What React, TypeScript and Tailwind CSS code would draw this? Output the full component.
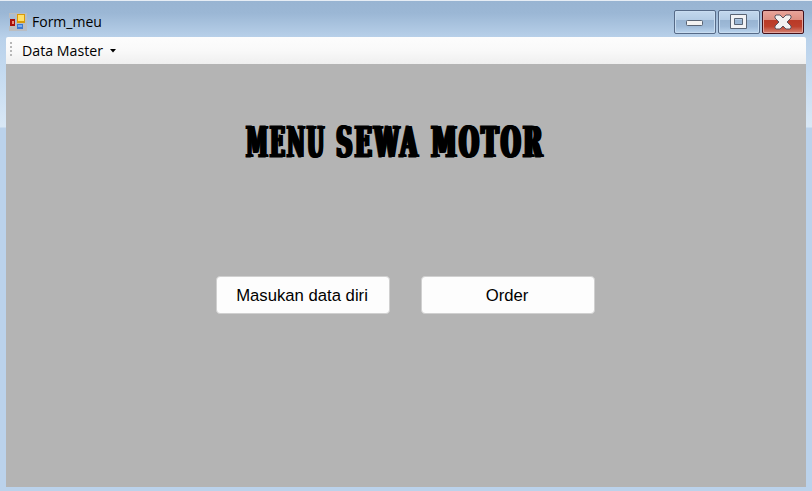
import type { ReactNode } from "react";

const FormIcon = () => (
  <svg width="18" height="18" viewBox="0 0 18 18" shapeRendering="crispEdges">
    <path d="M0 0h7v5H0zM0 13h7v5H0z" fill="#bdbdbd" />
    <path d="M1 1h5v4H1z" fill="#a9bdd3" />
    <path d="M7 0h11v18H7z" fill="#b9bdc3" />
    <rect x="1" y="6" width="5" height="7" fill="#a90f08" />
    <rect x="3" y="8" width="2" height="3" fill="#ed8d78" />
    <rect x="8" y="1" width="8" height="9" fill="#d89a08" />
    <rect x="9" y="2" width="6" height="6" fill="#ffe06a" />
    <rect x="8" y="11" width="6" height="5" fill="#3c78d0" />
    <rect x="9" y="12" width="4" height="2" fill="#78adf0" />
  </svg>
);

const CaptionButton = ({ close = false, label, children }: { close?: boolean; label: string; children: ReactNode }) => (
  <button
    aria-label={label}
    className={`flex h-6 w-[42px] items-center justify-center rounded-[2px] border ${
      close
        ? "border-[#43101a] bg-[linear-gradient(#e9a49a_0%,#dc8d80_42%,#b93a27_43%,#bd402c_70%,#d58475_100%)] shadow-[inset_0_0_0_1px_#e3a59d]"
        : "border-[#566a87] bg-[linear-gradient(#c3d8ed_0%,#b3cbe4_42%,#98b4d2_43%,#9ebad8_70%,#bcd5ee_100%)] shadow-[inset_0_0_0_1px_#c8dcf0]"
    }`}
  >
    {children}
  </button>
);

const TitleWord = ({ text, box, scale }: { text: string; box: string; scale: string }) => (
  <span className={`block ${box}`}>
    <span className={`block w-max origin-left ${scale}`}>{text}</span>
  </span>
);

const FormButton = ({ children }: { children: ReactNode }) => (
  <button className="h-[38px] w-[174px] rounded-[4px] border border-[#d0d0d0] bg-[#fdfdfd] pr-[2px] pt-[2px] font-['Liberation_Sans',Arial,sans-serif] text-[16.7px] text-black">
    {children}
  </button>
);

export default function App() {
  return (
    <div className="flex h-[491px] w-[812px] flex-col overflow-hidden border-t border-[#e6edf5] bg-[linear-gradient(#98b4d2_0px,#9bb7d5_12px,#b9d1ea_37px,#c4daf0_70px,#d9e8f6_126px,#bbd2eb_127px)] px-[6px] pb-1 font-['Open_Sans','Noto_Sans',sans-serif] text-black">
      <header className="flex h-9 shrink-0 justify-between">
        <div className="flex h-[42px] items-center gap-[5px] pl-[3px]">
          <FormIcon />
          <span className="text-[14px] leading-5">Form_meu</span>
        </div>
        <div className="flex gap-[2px] pr-[2px] pt-[9px]">
          <CaptionButton label="Minimize">
            <svg className="mt-[2px]" width="18" height="7" viewBox="0 0 18 7">
              <rect x="0.5" y="0.5" width="16" height="5" rx="1" fill="#f2f2f2" stroke="#596474" />
            </svg>
          </CaptionButton>
          <CaptionButton label="Maximize">
            <svg className="-ml-px -mt-px" width="17" height="15" viewBox="0 0 17 15">
              <path d="M.5.5h16v14H.5zM4.5 4.5v6h8v-6z" fill="#f1f2f4" fillRule="evenodd" stroke="#596474" />
            </svg>
          </CaptionButton>
          <CaptionButton label="Close" close>
            <svg className="-ml-px" width="18" height="16" viewBox="0 0 18 16">
              <path d="M2 1h4l3 3 3-3h4l1 1v2l-4 4 4 4v2l-1 1h-4l-3-3-3 3H2l-1-1v-2l4-4-4-4V2z" fill="#f3f1f1" stroke="#5b535e" strokeLinejoin="round" />
            </svg>
          </CaptionButton>
        </div>
      </header>
      <nav className="flex h-[27px] shrink-0 items-center rounded-t-[2px] bg-[linear-gradient(#fdfdfd,#f9f9f9_50%,#efefef)] pl-1">
        <svg className="-mt-[2px]" width="3" height="15" viewBox="0 0 3 15" shapeRendering="crispEdges">
          <path d="M0 0h2v2H0zM0 4h2v2H0zM0 8h2v2H0zM0 12h2v2H0z" fill="#b7b7b7" />
        </svg>
        <span className="ml-[9px] w-[82px] whitespace-nowrap text-[14.2px] leading-5">Data Master</span>
        <svg className="ml-[6px]" width="6" height="4" viewBox="0 0 6 4">
          <path d="M0 0h6L3 3.5z" fill="#000" />
        </svg>
      </nav>
      <main className="flex-1 bg-[#b4b4b4]">
        <h1 className="ml-[239px] flex gap-[11px] pt-[52px] font-['DejaVu_Serif',serif] text-[43px] font-bold leading-[52px] tracking-[5px] [-webkit-text-stroke:1px_black] [text-shadow:1px_0_black,2px_0_black,3px_0_black,4px_0_black,5px_0_black,6px_0_black]">
          <TitleWord text="MENU" box="w-[79px]" scale="scale-x-[0.452]" />
          <TitleWord text="SEWA" box="w-[84px]" scale="scale-x-[0.513]" />
          <TitleWord text="MOTOR" box="w-[112px]" scale="scale-x-[0.526]" />
        </h1>
        <div className="flex gap-[31px] pl-[210px] pt-[108px]">
          <FormButton>Masukan data diri</FormButton>
          <FormButton>Order</FormButton>
        </div>
      </main>
    </div>
  );
}
